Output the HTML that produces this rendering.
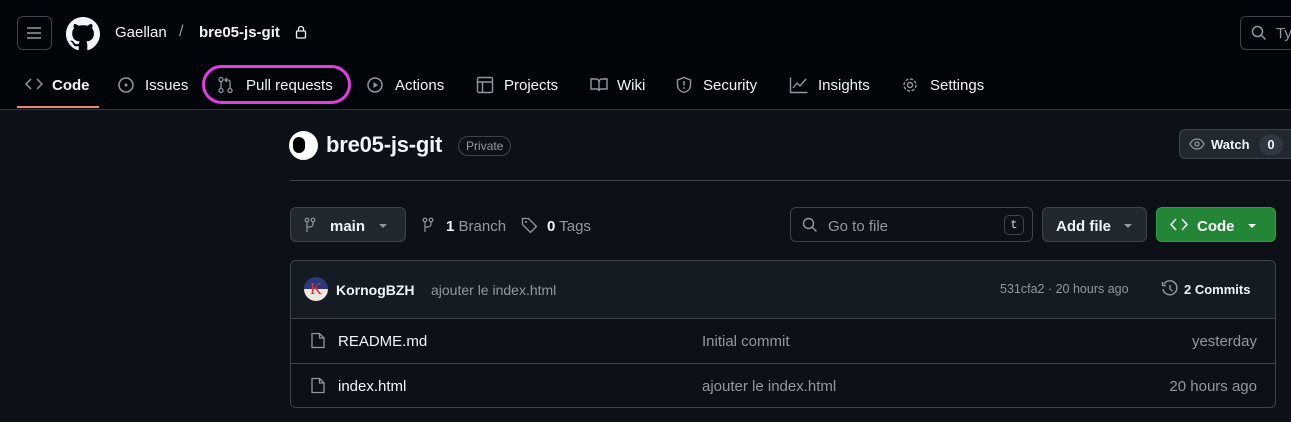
<!DOCTYPE html><html><head><meta charset="utf-8"><style>
*{box-sizing:border-box;margin:0;padding:0}
body{width:1291px;height:422px;background:#0d1117;font-family:"Liberation Sans",sans-serif;color:#f0f6fc;position:relative;overflow:hidden;font-size:15px}
.a{position:absolute;white-space:nowrap}
.hdr{position:absolute;left:0;top:0;width:1291px;height:110px;background:#010409;border-bottom:1px solid #30363d}
.btn{position:absolute;border:1px solid #3d444d;border-radius:6px;background:#212830}
.m{color:#9198a1}
svg{position:absolute}
.car{position:absolute;width:0;height:0;border-left:4px solid transparent;border-right:4px solid transparent;border-top:4px solid #9198a1}
</style></head><body>
<div class="hdr"></div>
<div class="btn" style="left:17px;top:16px;width:35px;height:34px;background:transparent"></div>
<svg style="left:26px;top:26px" width="16" height="14"><path d="M1 2h14M1 7h14M1 12h14" stroke="#9198a1" stroke-width="1.6"/></svg>
<svg style="left:66px;top:17px" width="34" height="34" viewBox="0 0 16 16"><path fill="#f0f6fc" d="M8 0C3.58 0 0 3.58 0 8c0 3.54 2.290 6.53 5.47 7.59.4.07.55-.17.55-.38 0-.19-.01-.82-.01-1.49-2.01.37-2.530-.49-2.690-.94-.09-.23-.48-.94-.82-1.13-.28-.15-.68-.52-.01-.53.63-.01 1.080.58 1.230.82.72 1.210 1.870.87 2.330.66.07-.52.28-.87.51-1.07-1.78-.2-3.640-.89-3.640-3.95 0-.87.31-1.590.82-2.150-.08-.2-.36-1.020.08-2.120 0 0 .67-.21 2.200.82.64-.18 1.320-.27 2-.27.68 0 1.360.09 2 .27 1.530-1.040 2.200-.82 2.200-.82.44 1.100.16 1.920.08 2.120.51.56.82 1.270.82 2.150 0 3.070-1.870 3.750-3.650 3.950.29.25.54.73.54 1.480 0 1.070-.01 1.930-.01 2.200 0 .21.15.46.55.38A8.013 8.013 0 0016 8c0-4.420-3.580-8-8-8z"/></svg>
<div class="a" style="left:115px;top:24px;font-size:15px">Gaellan</div>
<div class="a m" style="left:179px;top:23px;font-size:16px">/</div>
<div class="a" style="left:199px;top:24px;font-weight:bold">bre05-js-git</div>
<svg style="left:295px;top:25px" width="12" height="14"><rect x="1.5" y="6" width="9" height="7" rx="1" fill="none" stroke="#f0f6fc" stroke-width="1.3"/><path d="M3.5 6V4a2.5 2.5 0 015 0v2" fill="none" stroke="#f0f6fc" stroke-width="1.3"/></svg>
<div class="btn" style="left:1240px;top:16px;width:60px;height:34px;background:transparent"></div>
<svg style="left:1251px;top:25px" width="16" height="16"><circle cx="6.5" cy="6.5" r="5" fill="none" stroke="#9198a1" stroke-width="1.5"/><path d="M10 10l4.5 4.5" stroke="#9198a1" stroke-width="1.5"/></svg>
<div class="a m" style="left:1276px;top:25px">Ty</div>
<!-- tabs -->
<svg style="left:25px;top:77px" width="18" height="14"><path d="M6 2L1 7l5 5M12 2l5 5-5 5" fill="none" stroke="#9198a1" stroke-width="1.5"/></svg>
<div class="a" style="left:52px;top:77px;font-weight:bold">Code</div>
<div class="a" style="left:17px;top:106px;width:82px;height:2px;background:#f78166"></div>
<svg style="left:117px;top:76px" width="18" height="18"><circle cx="9" cy="9" r="7" fill="none" stroke="#9198a1" stroke-width="1.5"/><circle cx="9" cy="9" r="1.5" fill="#9198a1"/></svg>
<div class="a" style="left:145px;top:77px">Issues</div>
<div class="a" style="left:202px;top:65px;width:149px;height:39px;border:3px solid #e83ae8;border-radius:20px"></div>
<svg style="left:217px;top:76px" width="18" height="18"><circle cx="4" cy="3.5" r="2" fill="none" stroke="#9198a1" stroke-width="1.3"/><circle cx="4" cy="14.5" r="2" fill="none" stroke="#9198a1" stroke-width="1.3"/><circle cx="13" cy="14.5" r="2" fill="none" stroke="#9198a1" stroke-width="1.3"/><path d="M4 5.5v7M13 12.5V6a2 2 0 00-2-2H8M10 2L8 4l2 2" fill="none" stroke="#9198a1" stroke-width="1.3"/></svg>
<div class="a" style="left:246px;top:77px">Pull requests</div>
<svg style="left:366px;top:76px" width="18" height="18"><circle cx="9" cy="9" r="7" fill="none" stroke="#9198a1" stroke-width="1.5"/><path d="M7.5 6v6l4.5-3z" fill="#9198a1"/></svg>
<div class="a" style="left:395px;top:77px">Actions</div>
<svg style="left:476px;top:76px" width="18" height="18"><rect x="1.5" y="1.5" width="15" height="15" rx="1.5" fill="none" stroke="#9198a1" stroke-width="1.4"/><path d="M1.5 6h15M6.5 6v10.5" stroke="#9198a1" stroke-width="1.4"/></svg>
<div class="a" style="left:504px;top:77px">Projects</div>
<svg style="left:590px;top:77px" width="18" height="16"><path d="M1 2h5a3 3 0 013 3v9a2 2 0 00-2-2H1zM17 2h-5a3 3 0 00-3 3v9a2 2 0 012-2h6z" fill="none" stroke="#9198a1" stroke-width="1.4"/></svg>
<div class="a" style="left:617px;top:77px">Wiki</div>
<svg style="left:675px;top:76px" width="18" height="18"><path d="M9 1.5l6.5 2.5v5c0 4-3 6.5-6.5 7.5C5.5 15.5 2.5 13 2.5 9V4z" fill="none" stroke="#9198a1" stroke-width="1.4"/><path d="M9 5v4.5" stroke="#9198a1" stroke-width="1.5"/><circle cx="9" cy="12" r=".9" fill="#9198a1"/></svg>
<div class="a" style="left:703px;top:77px">Security</div>
<svg style="left:789px;top:76px" width="20" height="18"><path d="M1.5 1.5v15h17M4 12l4-5 3 3 6-7" fill="none" stroke="#9198a1" stroke-width="1.4"/></svg>
<div class="a" style="left:818px;top:77px">Insights</div>
<svg style="left:901px;top:76px" width="18" height="18"><circle cx="9" cy="9" r="2.5" fill="none" stroke="#9198a1" stroke-width="1.4"/><circle cx="9" cy="9" r="6" fill="none" stroke="#9198a1" stroke-width="1.4" stroke-dasharray="3 1.7"/></svg>
<div class="a" style="left:930px;top:77px">Settings</div>
<!-- repo header -->
<div class="a" style="left:289px;top:131px;width:29px;height:29px;border-radius:50%;background:#fff"></div>
<div class="a" style="left:293px;top:137px;width:12px;height:16px;border-radius:6px;background:#000"></div>
<div class="a" style="left:326px;top:132px;font-size:22px;font-weight:bold;letter-spacing:-0.2px">bre05-js-git</div>
<div class="a m" style="left:458px;top:136px;border:1px solid #3d444d;border-radius:12px;padding:2px 7px;font-size:12px">Private</div>
<div class="btn" style="left:1179px;top:129px;width:120px;height:30px"></div>
<svg style="left:1189px;top:137px" width="16" height="14"><path d="M1 7C3 3 5.5 2 8 2s5 1 7 5c-2 4-4.5 5-7 5S3 11 1 7z" fill="none" stroke="#9198a1" stroke-width="1.3"/><circle cx="8" cy="7" r="2" fill="none" stroke="#9198a1" stroke-width="1.3"/></svg>
<div class="a" style="left:1211px;top:137px;font-size:13px;font-weight:bold">Watch</div>
<div class="a" style="left:1259px;top:135px;width:24px;height:20px;border-radius:10px;background:#2f3742;font-size:13px;font-weight:bold;text-align:center;line-height:20px">0</div>
<div class="a" style="left:290px;top:180px;width:1001px;height:1px;background:#3d444d"></div>
<!-- toolbar -->
<div class="btn" style="left:290px;top:207px;width:116px;height:35px"></div>
<svg style="left:304px;top:217px" width="12" height="16"><circle cx="3" cy="3" r="1.8" fill="none" stroke="#9198a1" stroke-width="1.2"/><circle cx="9" cy="3" r="1.8" fill="none" stroke="#9198a1" stroke-width="1.2"/><path d="M3 5v10M9 5v2a3 3 0 01-3 3H3" fill="none" stroke="#9198a1" stroke-width="1.2"/></svg>
<div class="a" style="left:330px;top:218px;font-weight:bold">main</div>
<div class="car" style="left:379px;top:224px"></div>
<svg style="left:422px;top:217px" width="12" height="16"><circle cx="3" cy="3" r="1.8" fill="none" stroke="#9198a1" stroke-width="1.2"/><circle cx="9" cy="3" r="1.8" fill="none" stroke="#9198a1" stroke-width="1.2"/><path d="M3 5v10M9 5v2a3 3 0 01-3 3H3" fill="none" stroke="#9198a1" stroke-width="1.2"/></svg>
<div class="a" style="left:446px;top:218px"><b>1</b> <span class="m">Branch</span></div>
<svg style="left:521px;top:217px" width="17" height="17"><path d="M1.5 1.5h6l8 8-6 6-8-8z" fill="none" stroke="#9198a1" stroke-width="1.3"/><circle cx="5" cy="5" r="1" fill="#9198a1"/></svg>
<div class="a" style="left:547px;top:218px"><b>0</b> <span class="m">Tags</span></div>
<div class="a" style="left:790px;top:207px;width:243px;height:35px;border:1px solid #3d444d;border-radius:6px"></div>
<svg style="left:802px;top:217px" width="16" height="16"><circle cx="6.5" cy="6.5" r="5" fill="none" stroke="#9198a1" stroke-width="1.4"/><path d="M10 10l4.5 4.5" stroke="#9198a1" stroke-width="1.4"/></svg>
<div class="a m" style="left:828px;top:218px">Go to file</div>
<div class="a" style="left:1004px;top:215px;width:20px;height:20px;border:1px solid #3d444d;border-radius:5px;font-size:12px;text-align:center;line-height:18px;color:#d1d7e0;font-family:'Liberation Mono',monospace">t</div>
<div class="btn" style="left:1042px;top:207px;width:105px;height:35px"></div>
<div class="a" style="left:1056px;top:218px;font-weight:bold">Add file</div>
<div class="car" style="left:1124px;top:224px"></div>
<div class="a" style="left:1156px;top:207px;width:120px;height:35px;background:#238636;border-radius:6px;border:1px solid #2ea043"></div>
<svg style="left:1170px;top:218px" width="18" height="13"><path d="M6 1L1 6.5l5 5.5M12 1l5 5.5-5 5.5" fill="none" stroke="#fff" stroke-width="1.5"/></svg>
<div class="a" style="left:1197px;top:218px;font-weight:bold;color:#fff">Code</div>
<div class="car" style="left:1248px;top:224px;border-top-color:#fff"></div>
<!-- table -->
<div class="a" style="left:290px;top:260px;width:986px;height:148px;border:1px solid #3d444d;border-radius:6px;overflow:hidden">
<div style="height:58px;background:#151b23;border-bottom:1px solid #3d444d"></div>
<div style="height:45px;border-bottom:1px solid #3d444d"></div>
</div>
<div class="a" style="left:304px;top:277px;width:24px;height:24px;border-radius:50%;background:linear-gradient(#2b3a7a 50%,#f3e6e0 50%);color:#d33;font-family:'Liberation Serif',serif;font-size:17px;text-align:center;line-height:24px">K</div>
<div class="a" style="left:336px;top:282px;font-size:14px;font-weight:bold">KornogBZH</div>
<div class="a m" style="left:431px;top:282px;font-size:14px">ajouter le index.html</div>
<div class="a m" style="left:1000px;top:282px;font-size:12.5px">531cfa2 · 20 hours ago</div>
<svg style="left:1161px;top:280px" width="18" height="18"><path d="M3 4A7 7 0 1 1 2 9" fill="none" stroke="#9198a1" stroke-width="1.4"/><path d="M1.5 2v3.5H5M9 5v4l2.5 2" fill="none" stroke="#9198a1" stroke-width="1.4"/></svg>
<div class="a" style="left:1184px;top:282px;font-size:13px;font-weight:bold">2 Commits</div>
<svg style="left:311px;top:332px" width="14" height="17"><path d="M1 1.5h7.5L13 6v9.5H1z M8.5 1.5V6H13" fill="none" stroke="#9198a1" stroke-width="1.3"/></svg>
<div class="a" style="left:338px;top:333px">README.md</div>
<div class="a m" style="left:702px;top:333px">Initial commit</div>
<div class="a m" style="left:1188px;top:333px;width:69px;text-align:right">yesterday</div>
<svg style="left:311px;top:377px" width="14" height="17"><path d="M1 1.5h7.5L13 6v9.5H1z M8.5 1.5V6H13" fill="none" stroke="#9198a1" stroke-width="1.3"/></svg>
<div class="a" style="left:338px;top:378px">index.html</div>
<div class="a m" style="left:702px;top:378px">ajouter le index.html</div>
<div class="a m" style="left:1157px;top:378px;width:100px;text-align:right">20 hours ago</div>
</body></html>
